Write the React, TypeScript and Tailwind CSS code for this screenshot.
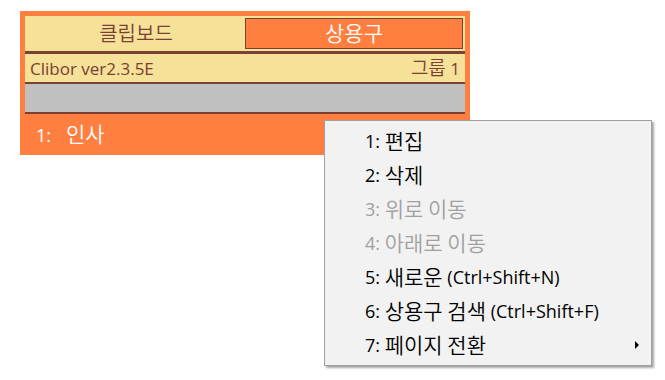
// Hangul in the original font runs wider than the latin text, so it gets its own size
function Txt({ text, k }: { text: string; k: string }) {
  const parts = text.split(/([\uac00-\ud7a3]+)/)
  return (
    <>
      {parts.map((p, i) =>
        /[\uac00-\ud7a3]/.test(p) ? (
          <span key={i} className={k}>
            {p}
          </span>
        ) : (
          <span key={i} className="whitespace-pre">
            {p}
          </span>
        ),
      )}
    </>
  )
}

const items = [
  { label: '1: 편집', disabled: false },
  { label: '2: 삭제', disabled: false },
  { label: '3: 위로 이동', disabled: true },
  { label: '4: 아래로 이동', disabled: true },
  { label: '5: 새로운 (Ctrl+Shift+N)', disabled: false },
  { label: '6: 상용구 검색 (Ctrl+Shift+F)', disabled: false },
  { label: '7: 페이지 전환', disabled: false, sub: true },
]

export default function App() {
  return (
    <div className="relative w-[665px] h-[380px] bg-white font-['Open_Sans','Noto_Sans_CJK_KR',sans-serif]">
      {/* Clibor window */}
      <div className="absolute left-[20px] top-[11px] w-[450px] bg-[#ff7f40] px-[5px] pt-[5px]">
        <div className="bg-[#f5e198]">
          <div className="flex h-[35px] items-center px-[2px]">
            <div className="flex-1 text-center text-[20px] font-[350] leading-none text-[#7a4033]">클립보드</div>
            <div className="flex h-[31px] w-[218px] items-center justify-center border border-[#7a4033] bg-[#ff7f40] text-[21px] font-[350] leading-none text-white">
              상용구
            </div>
          </div>
          <div className="h-[3px] bg-[#7a4033]" />
          <div className="flex h-[28px] items-center justify-between px-[5px] text-[17px] leading-none text-[#7a4033]">
            <span>Clibor ver2.3.5E</span>
            <span>
              <Txt text="그룹 1" k="text-[19px] font-[350]" />
            </span>
          </div>
          <div className="h-[2px] bg-[#7a4033]" />
          <div className="h-[28px] bg-[#c0c0c0]" />
          <div className="h-[2px] bg-[#7a4033]" />
        </div>
        <div className="flex h-[41px] items-center pl-[11px] text-[18px] leading-none text-white">
          <span>1:</span>
          <span className="ml-[15px] text-[21px] font-[350]">인사</span>
        </div>
      </div>

      {/* context menu */}
      <div className="absolute left-[324px] top-[120px] w-[328px] border border-[#a0a0a0] bg-[#f2f2f2] py-[3px] shadow-[2px_2px_2px_rgba(0,0,0,0.35)]">
        {items.map((it) => (
          <div
            key={it.label}
            className={`relative flex h-[34px] items-center pl-[40px] text-[18px] leading-none ${
              it.disabled ? 'text-[#a0a0a0]' : 'text-black'
            }`}
          >
            <Txt text={it.label} k="text-[21px] font-[350]" />
            {it.sub && (
              <svg className="absolute right-[11px] top-[13px]" width="5" height="8" viewBox="0 0 5 8">
                <path d="M0 0 L4 4 L0 8 Z" fill="#000" />
              </svg>
            )}
          </div>
        ))}
      </div>
    </div>
  )
}
